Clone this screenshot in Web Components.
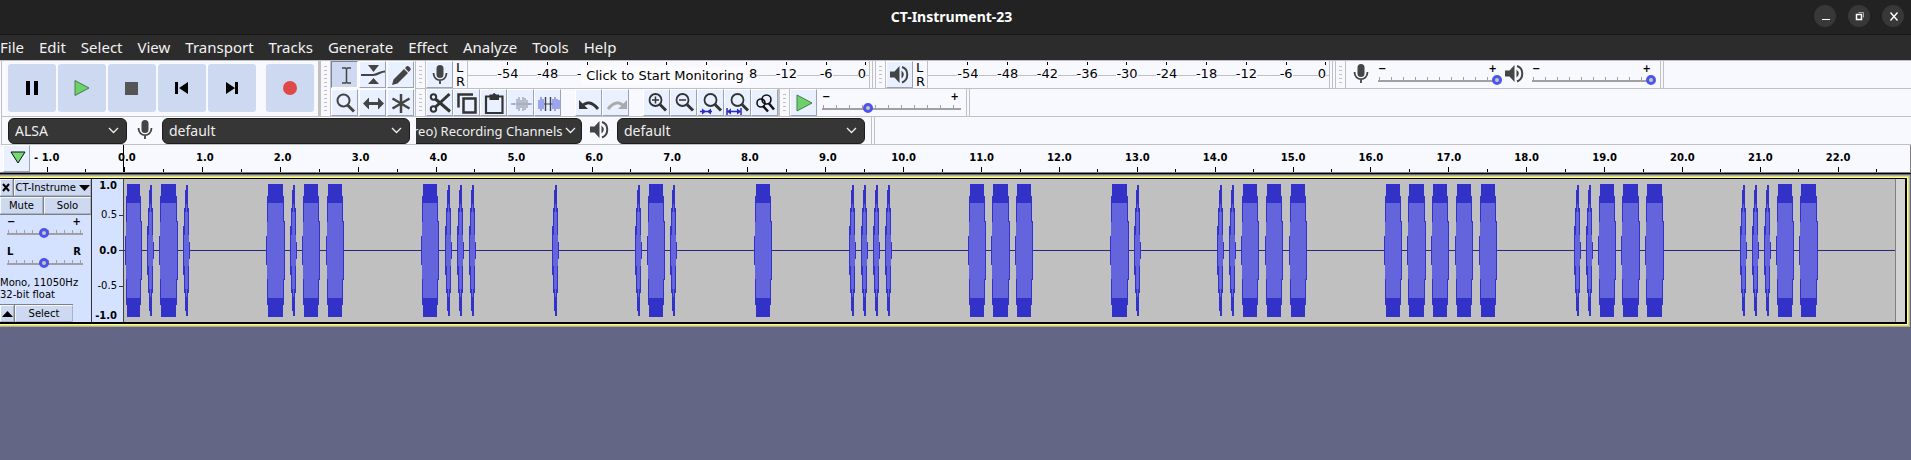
<!DOCTYPE html>
<html lang="en">
<head>
<meta charset="utf-8">
<title>CT-Instrument-23</title>
<style>
  html, body { margin: 0; min-height: 100%; background: #636685; }
  body { font-family: "DejaVu Sans", sans-serif; color: #000; overflow-x: hidden; }
</style>
</head>
<body>
<audio-editor></audio-editor>
<script>
const ICONS = {
  pause: '<path d="M6 3h4v14H6zM14 3h4v14h-4z" transform="translate(0 2)" fill="#000"/>',
  play: '<path d="M5 4.500V19.500L19 12z" fill="#6bd26b" stroke="#4a7a4a"/>',
  stop: '<path d="M5 6h13v13H5z" fill="#555"/>',
  first: '<path d="M5 6h3v12H5zM18 6v12L9 12z" fill="#000"/>',
  last: '<path d="M15 6h3v12h-3zM6 6v12l9-6z" fill="#000"/>',
  record: '<circle cx="12" cy="12" r="7" fill="#e04848"/>',
  ibeam: '<path d="M10 6h3.500l1 1 1-1H19M14.500 7v13M10 21h3.500l1-1 1 1H19" fill="none" stroke="#444" stroke-width="1.500"/>',
  envelope: '<path d="M8 3h11l-5.500 7zM8 22h11l-5.500-6z" fill="#444"/><path d="M1 13h12c6-.5 7-3.500 12-3.500" fill="none" stroke="#444" stroke-width="2.200"/>',
  pencil: '<path d="M4 23l1.500-5.500L16 7l4 4L9.500 21.500zM17 6l2-2q1.500-.5 3 1.500t.5 2.500l-2 2z" fill="#444"/>',
  glass: '<circle cx="11.500" cy="10.500" r="6" fill="none" stroke="#444" stroke-width="2"/><path d="M15.500 15l6.500 6.500" stroke="#444" stroke-width="3"/>',
  shift: '<path d="M3 13.500l6-6v4.500h9V7.500l6 6-6 6V15H9v4.500z" fill="#444"/>',
  multi: '<path d="M13 4v19M4.500 8.500l17 10M21.500 8.500l-17 10" stroke="#444" stroke-width="2.500"/>',
  mic: '<rect x="9.500" y="3" width="7" height="13" rx="3.500" fill="#444"/><path d="M6.500 11c0 9.500 13 9.500 13 0M13 18.500V22" fill="none" stroke="#444" stroke-width="1.800"/>',
  speaker: '<path d="M3 9.500h4.500l5-5.500v17l-5-5.500H3z" fill="#444"/><path d="M14.500 8.500q4.500 4 0 8z" fill="#444"/><path d="M15 5c7 2 7 13 0 15.500" fill="none" stroke="#444" stroke-width="2"/>',
  cut: '<g fill="none" stroke="#333"><circle cx="6.500" cy="7" r="2.700" stroke-width="2"/><circle cx="6.500" cy="19" r="2.700" stroke-width="2"/><path d="M8.500 9L23 21.500M8.500 17L22.500 4" stroke-width="3"/></g>',
  copy: '<path d="M4.500 17.500V4.500H19M9.500 8.500h12v14h-12z" fill="none" stroke="#333" stroke-width="2.500"/>',
  paste: '<path d="M5 6.500h16.500v16.500H5z" fill="none" stroke="#333" stroke-width="2.200"/><path d="M8.500 4.500h3q1.500-3 3.500 0h3V10H8.500z" fill="#333"/>',
  trim: '<path d="M5 14h17" stroke="#aab"/><path d="M9 9v10M11 7v14M13 10v8M15 7v14M17 8v12M19 10v8" stroke="#99a" stroke-width="1.200"/><path d="M3 14h4M20 14h4" stroke="#667ce0"/>',
  silence: '<path d="M9 14h9" stroke="#445"/><path d="M10.500 7v14M15.500 7v14" stroke="#445" stroke-width="1.500"/><path d="M4 10v9M6 7v14M8 9v10M18 9v10M20 7v14M22 9v10M24 10v9" stroke="#7c86e4" stroke-width="1.400"/>',
  undo: '<path d="M3 10v9h9z" fill="#333"/><path d="M5 17q8-9 17 2" fill="none" stroke="#333" stroke-width="2.800"/>',
  redo: '<path d="M24 10v9h-9z" fill="#aaa"/><path d="M22 17q-8-9-17 2" fill="none" stroke="#aaa" stroke-width="2.800"/>',
  zin: '<circle cx="11.500" cy="10" r="6" fill="none" stroke="#333" stroke-width="1.800"/><path d="M8 10h7M11.500 6.500v7" stroke="#333" stroke-width="1.500"/><path d="M16 14.500l6 6" stroke="#333" stroke-width="3"/>',
  zout: '<circle cx="11.500" cy="10" r="6" fill="none" stroke="#333" stroke-width="1.800"/><path d="M8 10h7" stroke="#333" stroke-width="1.500"/><path d="M16 14.500l6 6" stroke="#333" stroke-width="3"/>',
  zsel: '<circle cx="12.500" cy="10" r="6" fill="none" stroke="#333" stroke-width="1.800"/><path d="M17 14.500l6 6" stroke="#333" stroke-width="3"/><path d="M2 21.500h12" stroke="#2a2ac8" stroke-width="1.500"/><path d="M8 21.500l-4-3v6zM9 21.500l4-3v6z" fill="#2a2ac8"/>',
  zfit: '<circle cx="12.500" cy="10" r="6" fill="none" stroke="#333" stroke-width="1.800"/><path d="M17 14.500l6 6" stroke="#333" stroke-width="3"/><path d="M2 21.500h13M2 18v7M16 18v7" stroke="#2a2ac8" stroke-width="1.500"/><path d="M2 21.500l4-3v6zM16 21.500l-4-3v6z" fill="#2a2ac8"/>',
  ztog: '<circle cx="9" cy="13" r="4" fill="none" stroke="#111" stroke-width="1.600"/><circle cx="14.500" cy="9.500" r="4.500" fill="none" stroke="#111" stroke-width="1.600"/><path d="M11 16l5 5.500M17 13.500l5 6" stroke="#111" stroke-width="2.500"/>',
  go: '<path d="M6 5v16l15-8z" fill="#6bd26b" stroke="#4a7a4a"/>',
  pin: '<path d="M7 6h14l-7 11z" fill="#72dc72" stroke="#111"/>',
  min: '<path d="M8 14.500h8" stroke="#fff"/>',
  restore: '<path d="M8.500 9.500h5v5h-5z" fill="none" stroke="#fff" stroke-width="1.500"/><path d="M10.500 7.500h5v5" fill="none" stroke="#aaa"/>',
  close: '<path d="M8.500 7.500l7 8M15.500 7.500l-7 8" stroke="#fff" stroke-width="1.400"/>',
  x: '<path d="M2 2l6 7M8 2L2 9" stroke="#000" stroke-width="2"/>',
  down: '<path d="M0 3h11L5.500 9z" fill="#000"/>',
  up: '<path d="M0 9h11L5.500 3z" fill="#000"/>',
  chevron: '<path d="M1 3l4.500 4.500L10 3" fill="none" stroke="#eee" stroke-width="1.300"/>'
};
const svg = (name, size) => `<svg aria-hidden="true" width="${size}" height="${size}" viewBox="0 0 ${size} ${size}">${ICONS[name]}</svg>`;

class View extends HTMLElement {
  constructor() {
    super();
    this.attachShadow({ mode: 'open' });
  }
  connectedCallback() {
    this.shadowRoot.innerHTML =
      `<style>*{box-sizing:border-box}svg{display:block}${this.css()}</style>${this.html()}`;
  }
}

customElements.define('title-bar', class extends View {
  css() { return `
    :host{display:grid;grid-template-columns:1fr auto 1fr;align-items:center;height:35px;background:#222;border-bottom:1px solid #181818;color:#fff}
    h1{margin:0;font:bold 14px/20px "Noto Sans",sans-serif;grid-column:2;padding:0 8px 0 0}
    .w{display:flex;justify-content:flex-end;gap:12px;padding:0 7px 2px 0}
    button{width:22px;height:22px;border:0;border-radius:50%;background:#383838;padding:0;display:grid;place-items:center}`; }
  html() { return `<h1>CT-Instrument-23</h1><div class="w">
    <button aria-label="Minimize">${svg('min', 24)}</button><button aria-label="Restore">${svg('restore', 24)}</button><button aria-label="Close">${svg('close', 24)}</button></div>`; }
});

customElements.define('menu-bar', class extends View {
  css() { return `
    :host{display:flex;gap:15px;height:25px;background:#2c2c2c}
    button{border:0;padding:0 0 1px;background:none;color:#f2f2f2;font:15px/24px "Noto Sans",sans-serif}`; }
  html() { return ['File','Edit','Select','View','Transport','Tracks','Generate','Effect','Analyze','Tools','Help'].map(m => `<button>${m}</button>`).join(''); }
});

customElements.define('icon-button', class extends View {
  css() { return `
    :host{display:block;flex:none}
    button{display:grid;place-items:center;width:27px;height:27px;padding:0;border:1px solid;border-color:#fff #99a2b6 #99a2b6 #fff;background:#e9f0ff}
    :host([pressed]) button{background:#cdd9f0;border-color:#7b8498 #fff #fff #7b8498}
    :host([big]) button{width:48px;height:48px;border:0;border-radius:3px;background:#cdd9f0}`; }
  html() { return `<button aria-label="${this.getAttribute('label')}">${svg(this.getAttribute('icon'), this.hasAttribute('big') ? 24 : 27)}</button>`; }
});

customElements.define('tool-bar', class extends View {
  css() { return `
    :host{display:flex;flex:none;border-right:1px solid #c0c0c0}
    i{flex:none;width:11px;border:solid #c0c0c0;border-width:0 1px;padding:5px 3px}
    i::before{content:"";display:block;height:100%;background:repeating-linear-gradient(#c0c0c0 0 1px,transparent 1px 4px)}
    :host([plain]) i{display:none}`; }
  html() { return `<i></i><slot></slot>`; }
});

customElements.define('tick-slider', class extends View {
  css() { return `
    :host{display:block;flex:none;width:var(--w,124px)}
    .c{display:flex;justify-content:space-between;padding:0 5px 0 0;font:bold 10px/12px "DejaVu Sans",sans-serif;height:12px}
    input{appearance:none;-webkit-appearance:none;display:block;width:100%;height:10px;margin:0;
      background:linear-gradient(#a0a0a0,#a0a0a0) 0 5px/calc(100% - 3px) 2px no-repeat,
      repeating-linear-gradient(90deg,#a0a0a0 0 1px,transparent 1px var(--step,12px)) 1px 2px/calc(100% - 4px) 3px no-repeat}
    input::-webkit-slider-thumb{-webkit-appearance:none;width:10px;height:10px;border-radius:50%;border:3px solid #4b55ee;background:#c8c8b8}`; }
  html() {
    const a = this.getAttribute('min-text') || '−', b = this.getAttribute('max-text') || '+';
    return `<div class="c"><span>${a}</span><span>${b}</span></div>
    <input type="range" aria-label="${this.getAttribute('label')}" min="0" max="100" value="${this.getAttribute('value')}">`;
  }
});

customElements.define('level-meter', class extends View {
  css() { return `
    :host{display:flex;flex:none;width:446px;height:27px}
    .lr{width:14px;font-size:13px;line-height:14px;padding:0 0 0 3px}
    .s{position:relative;display:grid;grid-template-columns:repeat(9,1fr) 23px;flex:1;padding-left:20px;margin-right:2px;border-left:1px solid #c0c0c0;border-right:1px solid #c0c0c0;
       background:linear-gradient(#c0c0c0,#c0c0c0) 0 14px/100% 1px no-repeat}
    .s span{font-size:13px;line-height:25px;text-align:center;height:27px;background:linear-gradient(#000,#000) 50% 1px/1px 3px no-repeat}
    .s span b{font-weight:400;background:#f8f9ff}
    .s span:nth-of-type(10){text-align:right;padding-right:3px;background-position:calc(100% - 3px) 1px}
    .s button{position:absolute;left:113px;top:5px;width:168px;height:19px;border:0;padding:0;background:#fcfcff;font:13px/19px "DejaVu Sans",sans-serif;color:#000;white-space:nowrap}`; }
  html() {
    const m = this.getAttribute('message');
    return `<icon-button icon="${this.getAttribute('icon')}" label="${this.getAttribute('label')}"></icon-button>
    <div class="lr">L<br>R</div><div class="s">${[-54,-48,-42,-36,-30,-24,-18,-12,-6,0].map(n => `<span><b>${n}</b></span>`).join('')}${m ? `<button>${m}</button>` : ''}</div>`;
  }
});

customElements.define('device-select', class extends View {
  css() { return `
    :host{display:grid;flex:none;width:var(--w);height:26px}
    select,svg{grid-area:1/1}
    select{appearance:none;-webkit-appearance:none;width:100%;border:1px solid #1c1c1c;border-radius:6px;background:#363636;color:#eee;padding:0 6px;font:14px/22px "Noto Sans",sans-serif}
    :host([cut]) select{border-left:0;border-radius:0 6px 6px 0;padding:0;font-size:13px;text-indent:-3px}
    svg{justify-self:end;align-self:center;margin-right:8px;pointer-events:none}
    :host([cut]) svg{margin-right:6px}`; }
  html() { return `<select aria-label="${this.getAttribute('label')}"><option>${this.getAttribute('value')}</option></select>${svg('chevron', 11)}`; }
});

customElements.define('glyph-icon', class extends View {
  css() { return `:host{display:block;flex:none;width:27px}`; }
  html() { return svg(this.getAttribute('icon'), 27); }
});

customElements.define('tool-dock', class extends View {
  css() { return `
    :host{display:grid;grid-template-columns:auto auto 1fr;background:#f8f9ff;border-top:1px solid #c0c0c0}
    .row{display:flex;height:28px;border-bottom:1px solid #c0c0c0}
    .row>tool-bar{margin-right:2px}
    .row>.snug{margin-right:0}
    .end{width:1px;background:#c0c0c0}
    .main{display:flex;gap:2px;padding:3px 4px 0 6px;margin-left:1px;border:solid #c0c0c0;border-width:0 2px 1px 1px;height:56px}
    .main icon-button:last-child{margin-left:8px}
    .tools{display:grid;grid-template-columns:repeat(3,28px);row-gap:1px}
    .tb{border-bottom:1px solid #c0c0c0;height:56px;border-right:0}
    .gap{width:14px;flex:none}
    .dev{grid-column:1/-1;margin-left:1px;border-left:1px solid #c0c0c0;align-items:center;padding-left:6px}
    .dev .g{margin:0 3px 0 5px}
    .dev>.fill{align-self:stretch}`; }
  html() {
    const b = (i, l, x = '') => `<icon-button icon="${i}" label="${l}" ${x}></icon-button>`;
    return `
    <div class="main">${b('pause','Pause','big')}${b('play','Play','big')}${b('stop','Stop','big')}${b('first','Skip to Start','big')}${b('last','Skip to End','big')}${b('record','Record','big')}</div>
    <tool-bar class="tb"><div class="tools">${b('ibeam','Selection Tool','pressed')}${b('envelope','Envelope Tool')}${b('pencil','Draw Tool')}${b('glass','Zoom Tool')}${b('shift','Time Shift Tool')}${b('multi','Multi-Tool')}</div></tool-bar>
    <div>
      <div class="row">
        <tool-bar><level-meter icon="mic" label="Recording Meter" message="Click to Start Monitoring"></level-meter></tool-bar>
        <tool-bar><level-meter icon="speaker" label="Playback Meter"></level-meter></tool-bar>
        <tool-bar><glyph-icon icon="mic" style="margin-left:2px"></glyph-icon><tick-slider style="margin:2px 0 0 3px" label="Recording Volume" value="100"></tick-slider>
          <glyph-icon icon="speaker" style="margin-right:3px"></glyph-icon><tick-slider style="margin:2px 4px 0 0" label="Playback Volume" value="100"></tick-slider></tool-bar><div class="end"></div>
      </div>
      <div class="row">
        <tool-bar class="snug">${b('cut','Cut')}${b('copy','Copy')}${b('paste','Paste')}${b('trim','Trim Audio')}${b('silence','Silence Audio')}<div class="gap"></div>${b('undo','Undo')}${b('redo','Redo')}<div class="gap"></div>${b('zin','Zoom In')}${b('zout','Zoom Out')}${b('zsel','Zoom to Selection')}${b('zfit','Fit to Width')}${b('ztog','Zoom Toggle')}</tool-bar>
        <tool-bar>${b('go','Play at Speed')}<tick-slider style="--w:142px;--step:13px;margin:2px 2px 0 5px" label="Playback Speed" value="31"></tick-slider></tool-bar><div class="end"></div>
      </div>
    </div>
    <div class="row dev">
      <device-select style="--w:119px" label="Audio Host" value="ALSA"></device-select>
      <glyph-icon class="g" icon="mic"></glyph-icon>
      <device-select style="--w:248px" label="Recording Device" value="default"></device-select>
      <device-select cut style="--w:166px;margin-left:6px" label="Recording Channels" value="reo) Recording Channels"></device-select>
      <glyph-icon class="g" icon="speaker"></glyph-icon>
      <device-select style="--w:248px;margin-right:6px" label="Playback Device" value="default"></device-select>
      <tool-bar plain class="fill"></tool-bar><div class="end fill"></div>
    </div>`;
  }
});

customElements.define('time-ruler', class extends View {
  css() { return `
    :host{display:flex;height:27px;background:#f8f9ff;padding-left:3px;box-shadow:inset 2px 0 #f8f9ff,inset -1px 0 #808080}
    div{flex:1 1 0;display:flex;justify-content:center;font:bold 10px/25px "DejaVu Sans",sans-serif;white-space:nowrap;
      background:linear-gradient(#000,#000) 50% 100%/1px 5px no-repeat,linear-gradient(#000,#000) 100% 100%/1px 3px no-repeat}
    .n{flex:0 0 56px;justify-content:flex-start;text-indent:4px;background-position:17px 100%,100% 100%}
    .d{text-indent:4px}
    .z{background-image:linear-gradient(#000,#000),linear-gradient(#000,#000),linear-gradient(#000,#000);background-position:50% 100%,100% 100%,calc(50% - 1px) 0;background-size:1px 5px,1px 3px,1px 100%}
    .e{flex:0 0 34px;background:none}`; }
  html() {
    return `<icon-button icon="pin" label="Pinned Play Head"></icon-button><div class="n">- 1.0</div>` +
      Array.from({ length: 23 }, (_, i) => `<div class="${i < 10 ? 'd' : ''}${i ? '' : ' z'}">${i}.0</div>`).join('') + `<div class="e"></div>`;
  }
});

customElements.define('track-panel', class extends View {
  css() { return `
    :host{display:flex;flex-direction:column;flex:none;width:92px;height:143px;background:#d5e2ff;border-right:1px solid #333;font-size:10px}
    .r{display:flex;height:18px;gap:1px;background:#808080;border-bottom:1px solid #808080;flex:none}
    button{border:1px solid;border-color:#f4f8ff #aab4c8 #aab4c8 #f4f8ff;background:#cdd9f0;font:10px/14px "DejaVu Sans",sans-serif;color:#000;padding:0;display:flex;align-items:center;justify-content:center;height:17px;white-space:nowrap}
    .x{width:14px}.t{flex:1;gap:3px}.m{width:43px}.s{flex:1}
    tick-slider{--w:79px;--step:8px;margin-left:7px}
    p{margin:auto 0 3px;line-height:12px;white-space:nowrap}
    .f{display:flex;gap:1px;background:#808080;width:73px;border-top:1px solid #808080;height:18px}`; }
  html() { return `
    <div class="r"><button class="x" aria-label="Delete Track">${svg('x', 11)}</button><button class="t">CT-Instrume ${svg('down', 11)}</button></div>
    <div class="r"><button class="m">Mute</button><button class="s">Solo</button></div>
    <tick-slider style="margin-top:1px" label="Gain" value="47"></tick-slider>
    <tick-slider style="margin-top:8px" label="Pan" value="47" min-text="L" max-text="R"></tick-slider>
    <p>Mono, 11050Hz<br>32-bit float</p>
    <div class="f"><button class="x" aria-label="Collapse">${svg('up', 11)}</button><button class="s">Select</button></div>`; }
});

customElements.define('amplitude-ruler', class extends View {
  css() { return `
    :host{display:grid;grid-template-rows:18px 36px 35px 36px 18px;flex:none;width:32px;height:143px;background:#d5e2ff;border-right:1px solid #444;font-size:10px;line-height:36px;text-align:right}
    span{padding-right:6px;background:linear-gradient(#333,#333) 100% 50%/4px 1px no-repeat}
    .b{font-weight:700}.n{background:none;line-height:13px}.n:last-child{align-self:end}`; }
  html() { return `<span class="b n">1.0</span><span>0.5</span><span class="b">0.0</span><span>-0.5</span><span class="b n">-1.0</span>`; }
});

/* Each burst is [left, right] in clip pixels; short ones taper to a point. */
const BURSTS = [[125,142],[147,154],[159,178],[183,190],[266,285],[290,297],[302,320],[326,344],[421,439],[445,451],[457,463],[469,475],[552,558],[635,641],[647,665],[670,677],[754,772],[849,855],[861,867],[873,879],[885,891],[968,986],[991,1010],[1015,1033],[1110,1129],[1134,1141],[1217,1224],[1229,1236],[1241,1259],[1265,1283],[1289,1307],[1384,1402],[1407,1426],[1431,1449],[1455,1473],[1479,1497],[1574,1580],[1586,1592],[1598,1616],[1621,1640],[1645,1664],[1740,1747],[1752,1759],[1764,1771],[1776,1794],[1799,1818]];
customElements.define('wave-clip', class extends View {
  css() { return `:host{display:block;flex:1;min-width:0;background:#c0c0c0;border-right:1px solid #808080;height:143px}svg{width:100%;height:143px}`; }
  html() {
    const bar = (l, r, h) => `M${l - 124} ${71 - h}H${r - 124}V${72 + h}H${l - 124}Z`;
    let dark = '', light = '';
    for (const [l, r] of BURSTS) {
      if (r - l > 10) {
        dark += bar(l, r, 14) + bar(l + 1, r, 29) + bar(l + 1, r - 1, 54) + bar(l + 2, r - 2, 66);
        light += bar(l + 1, r - 1, 28) + bar(l + 2, r - 2, 47);
      } else {
        dark += bar(l, l + 7, 8) + bar(l, l + 6, 24) + bar(l + 1, l + 6, 42) + bar(l + 2, l + 5, 60) + bar(l + 3, l + 5, 65);
        light += bar(l + 1, l + 6, 15) + bar(l + 2, l + 5, 38) + bar(l + 3, l + 4, 46);
      }
    }
    return `<svg viewBox="0 0 1771 143" preserveAspectRatio="none" shape-rendering="crispEdges" role="img" aria-label="Waveform">
      <path d="M0 71h1771v1H0z" fill="#26267c"/><path d="${dark}" fill="#3232c8"/><path d="${light}" fill="#6464dc"/></svg>`;
  }
});

customElements.define('audio-editor', class extends View {
  css() { return `
    :host{display:block;font-family:"DejaVu Sans",sans-serif}
    .tr{border-top:1px solid #808080;box-shadow:inset 0 1px #000;padding-top:2px}
    .a{border:solid #b0b090;border-width:1px 1px 1px 0}
    .b{border:solid #dcd890;border-width:1px 1px 1px 0}
    .c{border:solid #ffff80;border-width:1px 1px 1px 0}
    .d{display:flex;border:solid #000;border-width:1px 2px 2px 0;background:#d4d4d4}
    .pad{width:9px;flex:none}
    main{padding-right:1px}`; }
  html() { return `<title-bar></title-bar><menu-bar></menu-bar><tool-dock></tool-dock><time-ruler></time-ruler>
    <div class="tr"><main><div class="a"><div class="b"><div class="c"><div class="d"><track-panel></track-panel><amplitude-ruler></amplitude-ruler><wave-clip></wave-clip><div class="pad"></div></div></div></div></div></main></div>`; }
});
</script>
</body>
</html>
